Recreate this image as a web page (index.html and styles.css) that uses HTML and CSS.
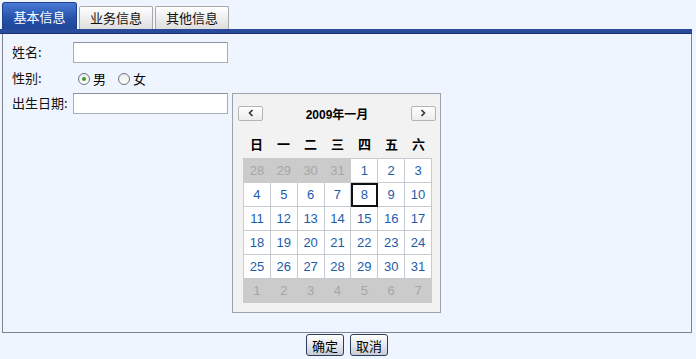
FILE: index.html
```html
<!DOCTYPE html>
<html lang="zh">
<head>
    <meta charset="UTF-8">
    <title>基本信息</title>
    <link rel="stylesheet" href="styles.css">
</head>
<body>
    <div class="page">
        <div class="tabs">
            <div class="tab active">基本信息</div>
            <div class="tab">业务信息</div>
            <div class="tab">其他信息</div>
        </div>
        <div class="tab-bar"></div>
        <div class="panel">
            <div class="form">
                <div class="label">姓名:</div>
                <div class="field"><input type="text" class="text-input"></div>
                <div class="label">性别:</div>
                <div class="field radios">
                    <span class="radio checked"></span><span class="radio-text">男</span>
                    <span class="radio"></span><span class="radio-text">女</span>
                </div>
                <div class="label">出生日期:</div>
                <div class="field"><input type="text" class="text-input"></div>
            </div>

            <div class="calendar">
                <div class="cal-head">
                    <div class="cal-btn">
                        <svg width="8" height="8" viewBox="0 0 8 8"><path d="M5.5 1 L2.5 4 L5.5 7" fill="none" stroke="#333" stroke-width="1.6"/></svg>
                    </div>
                    <div class="cal-title">2009年一月</div>
                    <div class="cal-btn">
                        <svg width="8" height="8" viewBox="0 0 8 8"><path d="M2.5 1 L5.5 4 L2.5 7" fill="none" stroke="#333" stroke-width="1.6"/></svg>
                    </div>
                </div>
                <div class="weekdays">
                    <span>日</span><span>一</span><span>二</span><span>三</span><span>四</span><span>五</span><span>六</span>
                </div>
                <table class="days"></table>
            </div>
        </div>
        <div class="actions">
            <button class="btn">确定</button>
            <button class="btn">取消</button>
        </div>
    </div>

    <script>
        // 2009年1月: starts on Thursday, 31 days
        const days = [];
        [28, 29, 30, 31].forEach(d => days.push({ d: d, other: true }));
        for (let d = 1; d <= 31; d++) days.push({ d: d, other: false });
        for (let d = 1; d <= 7; d++) days.push({ d: d, other: true });

        const table = document.querySelector('.days');
        for (let r = 0; r < 6; r++) {
            const row = document.createElement('tr');
            for (let c = 0; c < 7; c++) {
                const day = days[r * 7 + c];
                const cell = document.createElement('td');
                cell.textContent = day.d;
                if (day.other) cell.className = 'other';
                if (!day.other && day.d === 8) cell.className = 'today';
                row.appendChild(cell);
            }
            table.appendChild(row);
        }
    </script>
</body>
</html>
```

FILE: styles.css
```css
body {
    margin: 0;
    padding: 0;
    background-color: #eef5fe;
    font-family: "Liberation Sans", "Noto Sans CJK SC", sans-serif;
    font-size: 13px;
    color: #000;
}
.page {
    width: 692px;
    position: relative;
}
.tabs {
    display: flex;
    align-items: flex-end;
    gap: 2px;
    padding: 2px 0 0 2px;
    height: 27px;
}
.tab {
    width: 72px;
    height: 22px;
    line-height: 22px;
    text-align: center;
    border: 1px solid #a8a8a8;
    border-bottom: none;
    border-radius: 2px 2px 0 0;
    background: linear-gradient(#ffffff, #dedede);
    font-family: "Noto Sans CJK SC", sans-serif;
    font-size: 13px;
    color: #111;
}
.tab.active {
    width: 73px;
    height: 26px;
    line-height: 27px;
    border-color: #1d3f8e;
    border-radius: 3px 3px 0 0;
    background: linear-gradient(#4b79d4, #2550a8 60%, #1e4699);
    color: #fff;
}
.tab-bar {
    height: 4px;
    background-color: #2a4b9c;
    border-bottom: 1px solid #1b3272;
}
.panel {
    margin-left: 2px;
    height: 298px;
    border: 1px solid #7c838e;
    border-top: none;
    position: relative;
}
.form {
    display: grid;
    grid-template-columns: 61px 160px;
    grid-auto-rows: auto;
    padding: 8px 0 0 9px;
}
.label {
    font-family: "Noto Sans CJK SC", sans-serif;
    font-size: 13px;
    line-height: 20px;
    color: #111;
}
.field {
    padding-bottom: 5px;
}
.text-input {
    box-sizing: border-box;
    width: 155px;
    height: 21px;
    margin: 0;
    border: 1px solid #a6adb8;
    border-top-color: #8a929e;
    background: #fff;
    padding: 0 3px;
}
.radios {
    display: flex;
    align-items: center;
    height: 20px;
    padding: 1px 0 4px 5px;
}
.radio {
    box-sizing: border-box;
    width: 12px;
    height: 12px;
    border: 1px solid #6d7480;
    border-radius: 50%;
    background: linear-gradient(#eaeaea, #ffffff);
    position: relative;
}
.radio.checked::after {
    content: "";
    position: absolute;
    left: 3px;
    top: 3px;
    width: 4px;
    height: 4px;
    border-radius: 50%;
    background: #3c9a2c;
}
.radio-text {
    font-family: "Noto Sans CJK SC", sans-serif;
    margin: 0 12px 0 3px;
    line-height: 16px;
}
.calendar {
    position: absolute;
    left: 229px;
    top: 59px;
    width: 209px;
    height: 220px;
    box-sizing: border-box;
    border: 1px solid #9aa2ac;
    background: #f2f2f2;
    padding: 11px 9px 0 10px;
}
.cal-head {
    display: flex;
    justify-content: space-between;
    align-items: center;
    height: 16px;
    margin: 0 -5px;
}
.cal-btn {
    box-sizing: border-box;
    width: 25px;
    height: 15px;
    border: 1px solid #b4b4b4;
    border-radius: 2px;
    background: linear-gradient(#ffffff, #ececec);
    display: flex;
    align-items: center;
    justify-content: center;
}
.cal-title {
    font-weight: bold;
    font-size: 12px;
    font-family: "Liberation Sans", "Noto Sans CJK SC", sans-serif;
}
.weekdays {
    display: grid;
    grid-template-columns: repeat(7, 27px);
    margin-top: 13px;
    height: 24px;
    line-height: 20px;
    text-align: center;
    font-weight: bold;
    font-family: "Noto Sans CJK SC", sans-serif;
    font-size: 13px;
}
.days {
    border-collapse: collapse;
    width: 189px;
}
.days td {
    width: 27px;
    height: 23px;
    padding: 0;
    text-align: center;
    background: #fff;
    border: 1px solid #c6ccd4;
    color: #1d5bab;
    font-size: 13px;
}
.days td.other {
    background: #cbcbcb;
    border-color: #cbcbcb;
    color: #a6a6a6;
}
.days td.today {
    outline: 2px solid #111;
    outline-offset: -2px;
}
.actions {
    display: flex;
    justify-content: center;
    gap: 6px;
    padding-top: 1px;
    margin-left: 2px;
}
.btn {
    box-sizing: border-box;
    width: 38px;
    height: 22px;
    padding: 0;
    border: 1px solid #2c3e5c;
    border-radius: 3px;
    background: linear-gradient(#ffffff, #dfe3ea 60%, #c5ccd8);
    font-family: "Noto Sans CJK SC", sans-serif;
    font-size: 13px;
    color: #000;
}
```
